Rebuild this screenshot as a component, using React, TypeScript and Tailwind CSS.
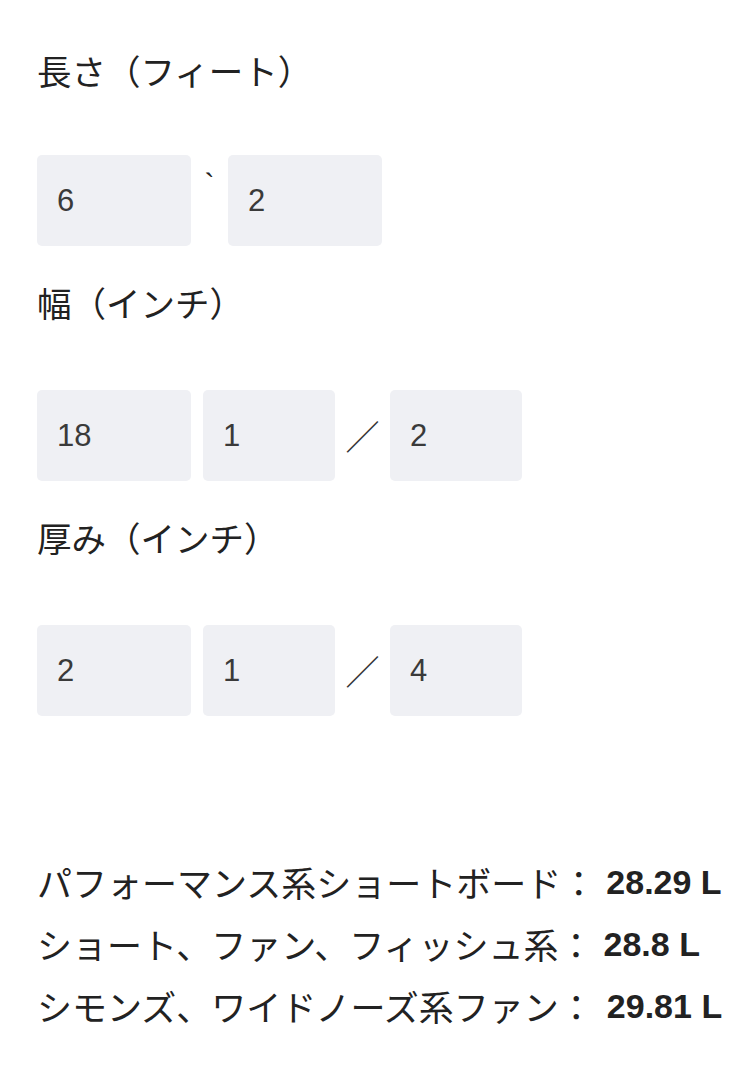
import React from "react";

const jp = { fontFamily: '"Noto Sans CJK JP", "Liberation Sans", sans-serif' };
const num = { fontFamily: '"Liberation Sans", Arial, sans-serif' };

function Box({ value, w }: { value: string; w: string }) {
  return (
    <input
      type="text"
      readOnly
      defaultValue={value}
      style={num}
      className={`${w} h-[91px] rounded-[5px] bg-[#eff0f4] pl-[20px] text-[31px] text-[#3a3a3a] outline-none`}
    />
  );
}

function Label({ children }: { children: React.ReactNode }) {
  return (
    <div style={jp} className="h-[50px] text-[34.5px] leading-[50px] text-[#222]">
      {children}
    </div>
  );
}

function Slash() {
  return (
    <div style={jp} className="flex w-[55px] items-center justify-center text-[34px] text-[#333]">
      ／
    </div>
  );
}

function Result({ label, value, gap }: { label: string; value: string; gap: string }) {
  return (
    <div style={jp} className="flex h-[62px] items-center whitespace-nowrap text-[35px] text-[#222]">
      <span className="shrink-0">{label}</span>
      <span style={num} className={`${gap} shrink-0 text-[34px] font-bold`}>
        {value}
      </span>
    </div>
  );
}

export default function App() {
  return (
    <div className="min-h-[1080px] bg-white pl-[37px] pt-[45px]">
      <Label>長さ（フィート）</Label>
      <div className="mt-[60px] flex">
        <Box value="6" w="w-[154px]" />
        <div style={num} className="flex w-[37px] justify-center pt-[14px] text-[30px] leading-none text-[#222]">
          `
        </div>
        <Box value="2" w="w-[154px]" />
      </div>

      <div className="mt-[31px]">
        <Label>幅（インチ）</Label>
      </div>
      <div className="mt-[63px] flex">
        <Box value="18" w="w-[154px]" />
        <div className="w-[12px]" />
        <Box value="1" w="w-[132px]" />
        <Slash />
        <Box value="2" w="w-[132px]" />
      </div>

      <div className="mt-[31px]">
        <Label>厚み（インチ）</Label>
      </div>
      <div className="mt-[63px] flex">
        <Box value="2" w="w-[154px]" />
        <div className="w-[12px]" />
        <Box value="1" w="w-[132px]" />
        <Slash />
        <Box value="4" w="w-[132px]" />
      </div>

      <div className="mt-[135px]">
        <Result label="パフォーマンス系ショートボード：" value="28.29 L" gap="ml-[10px]" />
        <Result label="ショート、ファン、フィッシュ系：" value="28.8 L" gap="ml-[10px]" />
        <Result label="シモンズ、ワイドノーズ系ファン：" value="29.81 L" gap="ml-[13px]" />
      </div>
    </div>
  );
}
